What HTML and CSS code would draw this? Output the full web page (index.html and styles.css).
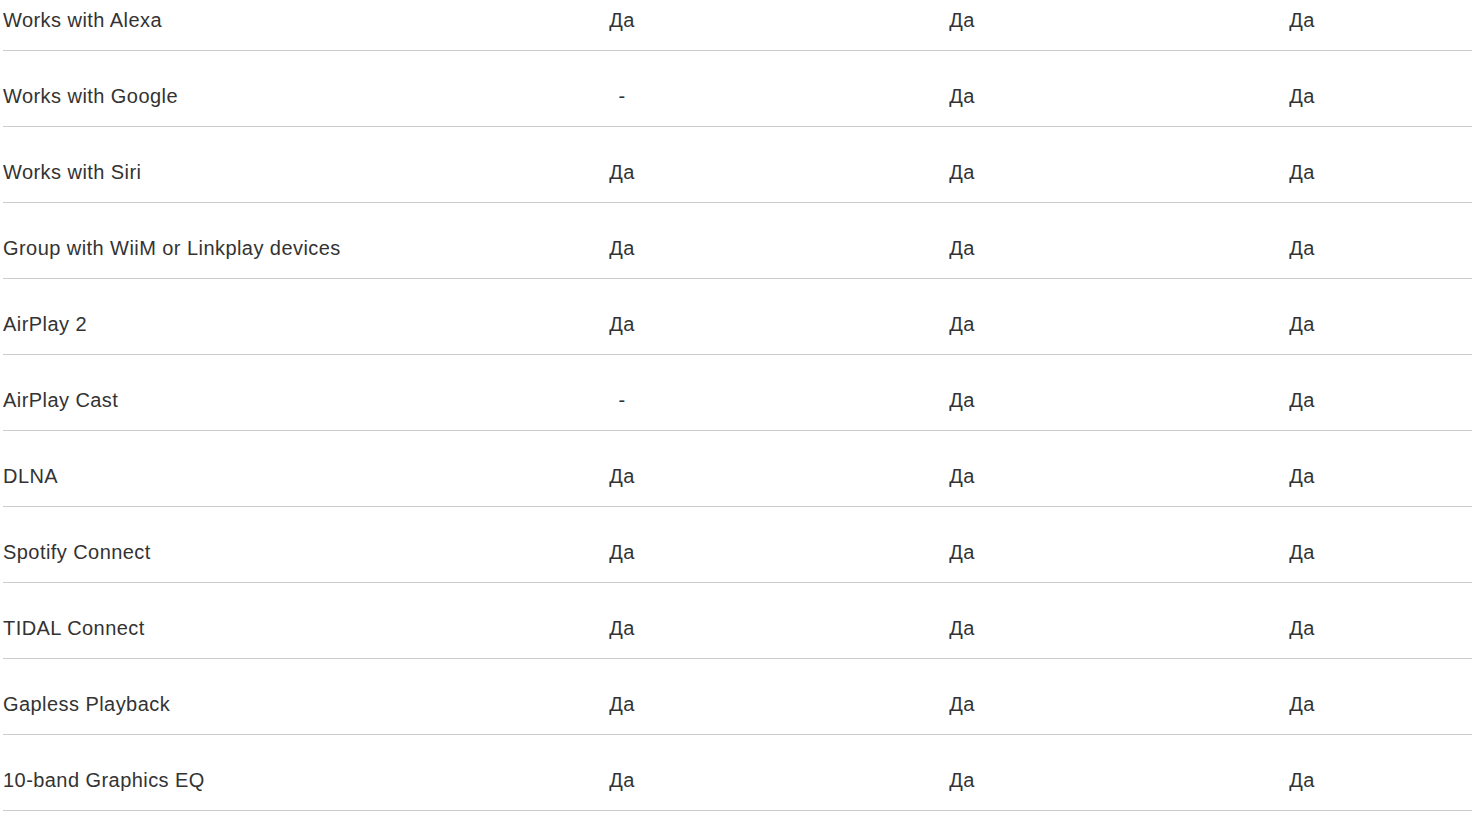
FILE: index.html
```html
<!DOCTYPE html>
<html lang="ru">
<head>
<meta charset="utf-8">
<link rel="stylesheet" href="styles.css">
</head>
<body>
<div class="specs">
  <div class="row"><div class="label">Works with Alexa</div><div class="val">Да</div><div class="val">Да</div><div class="val">Да</div></div>
  <div class="row"><div class="label">Works with Google</div><div class="val">-</div><div class="val">Да</div><div class="val">Да</div></div>
  <div class="row"><div class="label">Works with Siri</div><div class="val">Да</div><div class="val">Да</div><div class="val">Да</div></div>
  <div class="row"><div class="label">Group with WiiM or Linkplay devices</div><div class="val">Да</div><div class="val">Да</div><div class="val">Да</div></div>
  <div class="row"><div class="label">AirPlay 2</div><div class="val">Да</div><div class="val">Да</div><div class="val">Да</div></div>
  <div class="row"><div class="label">AirPlay Cast</div><div class="val">-</div><div class="val">Да</div><div class="val">Да</div></div>
  <div class="row"><div class="label">DLNA</div><div class="val">Да</div><div class="val">Да</div><div class="val">Да</div></div>
  <div class="row"><div class="label">Spotify Connect</div><div class="val">Да</div><div class="val">Да</div><div class="val">Да</div></div>
  <div class="row"><div class="label">TIDAL Connect</div><div class="val">Да</div><div class="val">Да</div><div class="val">Да</div></div>
  <div class="row"><div class="label">Gapless Playback</div><div class="val">Да</div><div class="val">Да</div><div class="val">Да</div></div>
  <div class="row"><div class="label">10-band Graphics EQ</div><div class="val">Да</div><div class="val">Да</div><div class="val">Да</div></div>
</div>
</body>
</html>
```
FILE: styles.css
```css
html, body {
  margin: 0;
  padding: 0;
  background: #ffffff;
}
body {
  font-family: "Liberation Sans", Arial, sans-serif;
  color: #333333;
  font-size: 20px;
  letter-spacing: 0.44px;
}
.specs {
  margin: -25px 0 0 3px;
  width: 1469px;
  display: flex;
  flex-direction: column;
}
.row {
  display: grid;
  grid-template-columns: 449px 340px 340px 340px;
  padding: 30px 0 15px;
  line-height: 30px;
  border-bottom: 1px solid #cccccc;
}
.label {
  text-align: left;
  white-space: nowrap;
}
.val {
  text-align: center;
}
```
